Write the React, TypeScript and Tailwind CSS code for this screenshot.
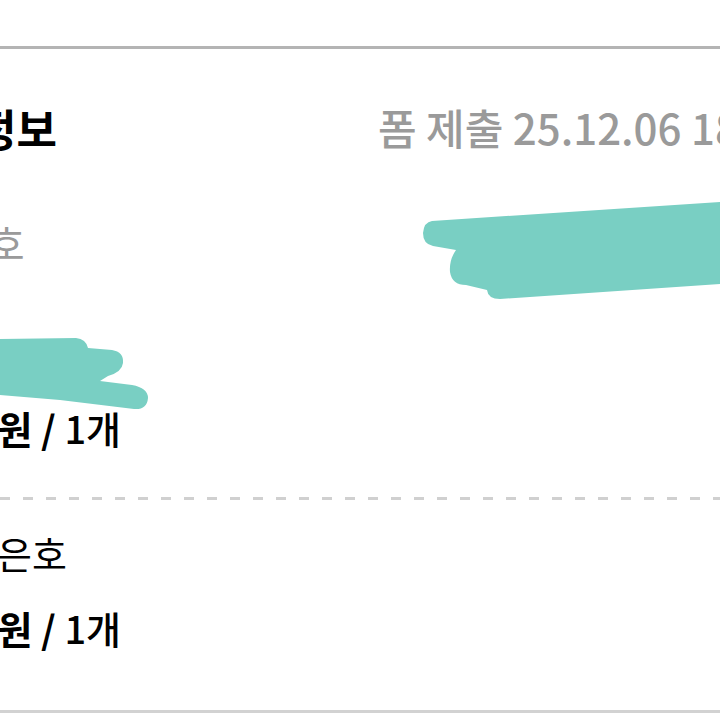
import React from "react";

const font = { fontFamily: '"Noto Sans CJK KR", "Noto Sans", sans-serif' };

export default function App() {
  return (
    <div className="relative w-[720px] h-[720px] overflow-hidden bg-white" style={font}>
      <div className="mt-[46px] h-[3px] bg-[#b4b4b4]" />
      <div className="-ml-[127px] w-[900px]">
        <div className="mt-[57px] flex items-start">
          <div className="w-[505px] shrink-0 pl-[12px] text-[44px] leading-none font-bold text-black whitespace-nowrap">
            주문 정보
          </div>
          <div className="text-[42px] leading-none font-medium text-[#9a9a9a] whitespace-nowrap">
            폼 제출 25.12.06 18:32
          </div>
        </div>
        <div className="mt-[73px] pl-[8px] text-[39px] leading-none text-[#9a9a9a] whitespace-nowrap">주문번호</div>
        <div className="mt-[75px] text-[38px] leading-none text-black whitespace-nowrap">상품명: 은호</div>
        <div className="mt-[34px] text-[38px] leading-none text-black whitespace-nowrap">
          <span className="font-bold">15,000원 / </span>
          <span className="font-medium">1개</span>
        </div>
      </div>
      <div className="mt-[50px] h-[3px] w-full bg-[repeating-linear-gradient(to_right,#d0d0d0_0px,#d0d0d0_10px,transparent_10px,transparent_23px)]" />
      <div className="-ml-[127px]">
        <div className="mt-[34px] text-[38px] leading-none text-black whitespace-nowrap">상품명: 은호</div>
        <div className="mt-[37px] text-[38px] leading-none text-black whitespace-nowrap">
          <span className="font-bold">15,000원 / </span>
          <span className="font-medium">1개</span>
        </div>
      </div>
      <div className="mt-[63px] h-[3px] bg-[#d2d2d2]" />
      <svg className="absolute left-0 top-0" width="720" height="720" viewBox="0 0 720 720">
        <path
          fill="#79cfc3"
          d="M432,221 L720,202 L720,284 L500,299 Q488,299 487,290 L466,285 Q452,285 450,272 Q449,260 456,250 L433,246 Q423,244 423,233 Q424,222 432,221 Z"
        />
        <path
          fill="#79cfc3"
          d="M0,339 L76,338 Q86,339 88,348 L112,350 Q124,352 123,363 Q122,372 108,376 L100,381 L132,385 Q148,388 148,398 Q147,410 134,409 L60,400 L0,395 Z"
        />
      </svg>
    </div>
  );
}
